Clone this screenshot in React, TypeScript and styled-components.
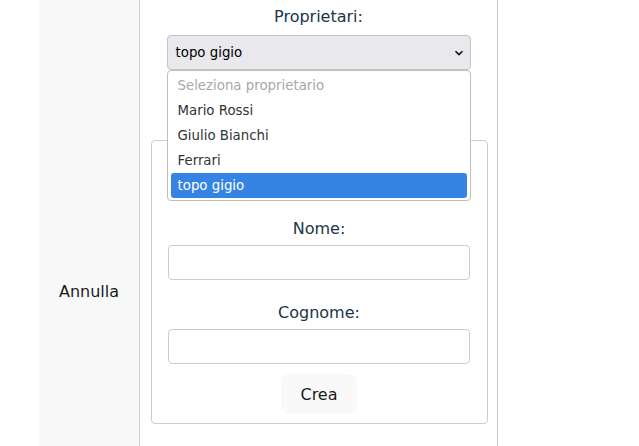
import styled, { createGlobalStyle } from "styled-components";

const GlobalStyle = createGlobalStyle`
  html, body {
    margin: 0;
    padding: 0;
    background: #ffffff;
  }
  body {
    font-family: "DejaVu Sans", Verdana, sans-serif;
    color: #213547;
  }
`;

const Page = styled.div`
  display: flex;
  height: 446px;
  padding-left: 39px;
  overflow: hidden;
`;

const SideCell = styled.div`
  width: 100px;
  background: #f9f9f9;
  border-right: 1px solid #cccccc;
  display: flex;
  align-items: center;
  justify-content: center;
`;

const CancelButton = styled.button`
  border: none;
  background: transparent;
  font-family: inherit;
  font-size: 16px;
  color: #1a1a1a;
  padding: 0;
  margin-top: 136px;
  cursor: pointer;
`;

const MainCell = styled.div`
  width: 358px;
  border-right: 1px solid #cccccc;
  display: flex;
  flex-direction: column;
  align-items: center;
  padding-top: 5px;
  box-sizing: border-box;
`;

const Label = styled.label`
  display: block;
  font-size: 16px;
  line-height: 24px;
  color: #213547;
  text-align: center;
`;

const SelectWrap = styled.div`
  position: relative;
  width: 304px;
  margin-top: 6px;
`;

const SelectBox = styled.div`
  box-sizing: border-box;
  height: 35px;
  background: #e9e9ed;
  border: 1px solid #c4c4c8;
  border-radius: 4px;
  display: flex;
  align-items: center;
  justify-content: space-between;
  padding: 0 6px 0 8px;
  font-size: 13.33px;
  color: #000000;
`;

const Popup = styled.ul`
  position: absolute;
  top: 35px;
  left: 0;
  right: 0;
  margin: 0;
  padding: 2px 3px;
  list-style: none;
  background: #ffffff;
  border: 1px solid #c0bdbb;
  border-radius: 4px;
  z-index: 5;
`;

const Option = styled.li<{ $selected?: boolean; $placeholder?: boolean }>`
  height: 25px;
  line-height: 25px;
  padding: 0 7px;
  font-size: 13.33px;
  border-radius: 3px;
  color: ${(p) => (p.$selected ? "#ffffff" : p.$placeholder ? "#a8a8a8" : "#2e3436")};
  background: ${(p) => (p.$selected ? "#3584e4" : "transparent")};
`;

const Fieldset = styled.fieldset`
  box-sizing: border-box;
  width: 337px;
  margin: 70px 0 0 1px;
  padding: 76px 0 9px;
  border: 1px solid #cccccc;
  border-radius: 4px;
  display: flex;
  flex-direction: column;
  align-items: center;
`;

const Field = styled.div`
  display: flex;
  flex-direction: column;
  align-items: center;
  & + & {
    margin-top: 21px;
  }
`;

const TextInput = styled.input`
  box-sizing: border-box;
  width: 302px;
  height: 35px;
  margin-top: 4px;
  border: 1px solid #cccccc;
  border-radius: 4px;
  background: #ffffff;
  font-family: inherit;
  font-size: 13.33px;
`;

const CreateButton = styled.button`
  margin-top: 10px;
  height: 40px;
  padding: 0 19px;
  border: none;
  border-radius: 8px;
  background: #f9f9f9;
  font-family: inherit;
  font-size: 16px;
  font-weight: 500;
  color: #1a1a1a;
  cursor: pointer;
`;

const owners = ["Mario Rossi", "Giulio Bianchi", "Ferrari", "topo gigio"];

const Chevron = () => (
  <svg width="10" height="6" viewBox="0 0 10 6">
    <path d="M1.5 1.2 L5 4.6 L8.5 1.2" fill="none" stroke="#111" strokeWidth="1.6" />
  </svg>
);

const App = () => {
  const selected = "topo gigio";
  return (
    <>
      <GlobalStyle />
      <Page>
        <SideCell>
          <CancelButton>Annulla</CancelButton>
        </SideCell>
        <MainCell>
          <Label>Proprietari:</Label>
          <SelectWrap>
            <SelectBox>
              <span>{selected}</span>
              <Chevron />
            </SelectBox>
            <Popup>
              <Option $placeholder>Seleziona proprietario</Option>
              {owners.map((o) => (
                <Option key={o} $selected={o === selected}>
                  {o}
                </Option>
              ))}
            </Popup>
          </SelectWrap>
          <Fieldset>
            <Field>
              <Label>Nome:</Label>
              <TextInput type="text" />
            </Field>
            <Field>
              <Label>Cognome:</Label>
              <TextInput type="text" />
            </Field>
            <CreateButton>Crea</CreateButton>
          </Fieldset>
        </MainCell>
      </Page>
    </>
  );
};

export default App;
